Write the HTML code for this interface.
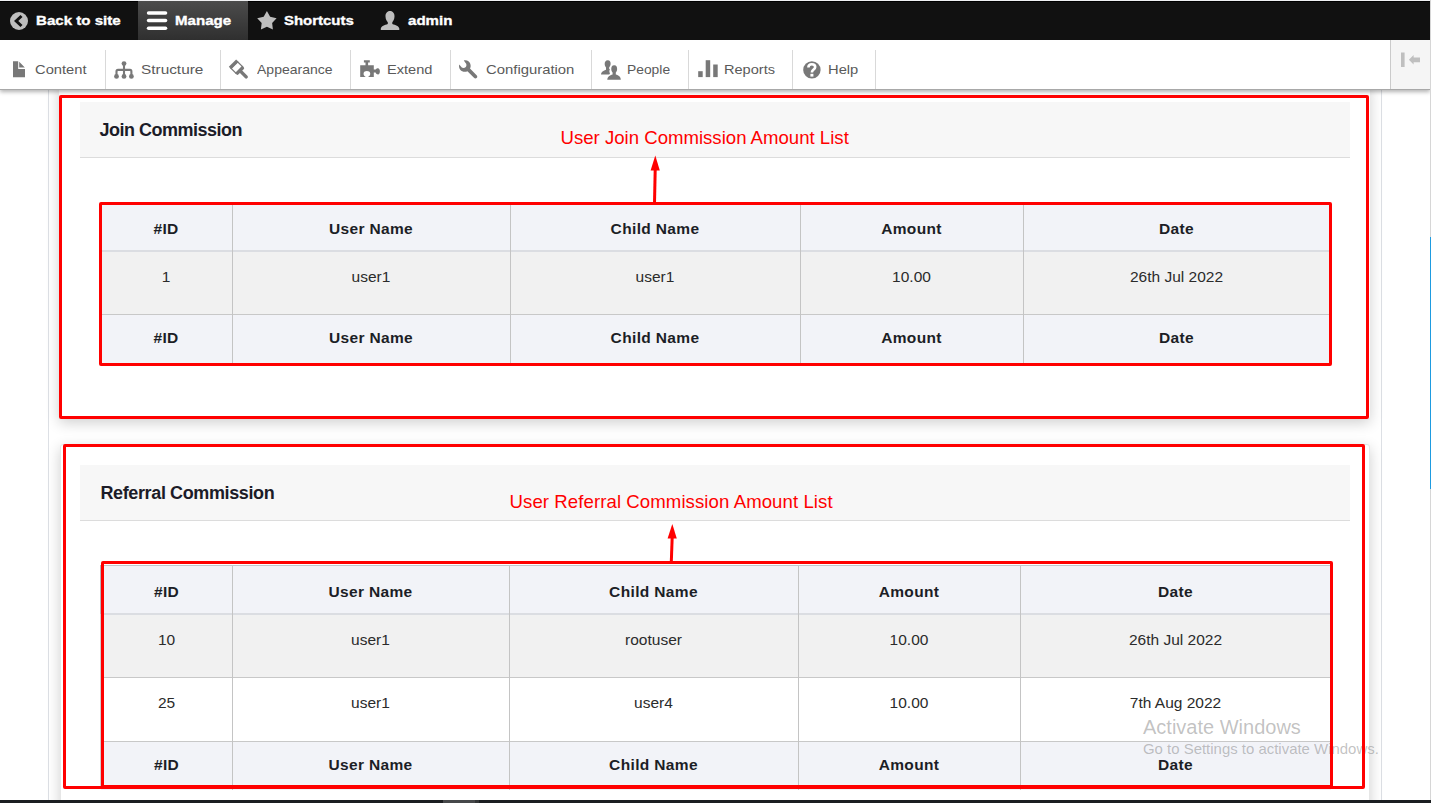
<!DOCTYPE html>
<html><head><meta charset="utf-8"><title>Commission</title>
<style>
html,body{margin:0;padding:0}
body{width:1431px;height:803px;overflow:hidden;position:relative;background:#fff;font-family:"Liberation Sans", sans-serif}
</style></head><body>
<div style="position:absolute;left:48px;top:89px;width:1px;height:711px;background:#dde0e5"></div>
<div style="position:absolute;left:1381px;top:89px;width:1px;height:711px;background:#dde0e5"></div>
<div style="position:absolute;left:59px;top:82px;width:1311px;height:337px;box-shadow:0 4px 14px rgba(0,0,0,0.19);border-radius:3px;background:#fff"></div>
<div style="position:absolute;left:60px;top:444px;width:1310px;height:380px;box-shadow:0 4px 14px rgba(0,0,0,0.19);border-radius:3px;background:#fff;border:1px solid #e6e6e6;box-sizing:border-box"></div>
<div style="position:absolute;left:80px;top:102px;width:1270px;height:55px;background:#f7f7f7;border-bottom:1px solid #dcdcdc"></div>
<div style="position:absolute;left:80px;top:465px;width:1270px;height:55px;background:#f7f7f7;border-bottom:1px solid #dcdcdc"></div>
<div style="position:absolute;left:99.5px;top:120.76px;font-size:18px;line-height:1;font-weight:bold;color:#1c1c28;letter-spacing:-0.5px;white-space:nowrap;">Join Commission</div>
<div style="position:absolute;left:100.5px;top:483.76px;font-size:18px;line-height:1;font-weight:bold;color:#1c1c28;letter-spacing:-0.38px;white-space:nowrap;">Referral Commission</div>
<div style="position:absolute;left:100px;top:204px;width:1230px;height:46px;background:#f2f3f8"></div>
<div style="position:absolute;left:100px;top:250px;width:1230px;height:2px;background:#dbdde2"></div>
<div style="position:absolute;left:100px;top:252px;width:1230px;height:62px;background:#f1f1f1"></div>
<div style="position:absolute;left:100px;top:314px;width:1230px;height:1px;background:#c8c8c8"></div>
<div style="position:absolute;left:100px;top:315px;width:1230px;height:49px;background:#f2f3f8"></div>
<div style="position:absolute;left:232px;top:204px;width:1px;height:160px;background:#c4c4c4"></div>
<div style="position:absolute;left:510px;top:204px;width:1px;height:160px;background:#c4c4c4"></div>
<div style="position:absolute;left:800px;top:204px;width:1px;height:160px;background:#c4c4c4"></div>
<div style="position:absolute;left:1023px;top:204px;width:1px;height:160px;background:#c4c4c4"></div>
<div style="position:absolute;left:100px;top:220.88px;width:132px;text-align:center;font-size:15.5px;line-height:1;font-weight:bold;color:#1c1e26;letter-spacing:0.35px;white-space:nowrap;">#ID</div>
<div style="position:absolute;left:232px;top:220.88px;width:278px;text-align:center;font-size:15.5px;line-height:1;font-weight:bold;color:#1c1e26;letter-spacing:0.35px;white-space:nowrap;">User Name</div>
<div style="position:absolute;left:510px;top:220.88px;width:290px;text-align:center;font-size:15.5px;line-height:1;font-weight:bold;color:#1c1e26;letter-spacing:0.35px;white-space:nowrap;">Child Name</div>
<div style="position:absolute;left:800px;top:220.88px;width:223px;text-align:center;font-size:15.5px;line-height:1;font-weight:bold;color:#1c1e26;letter-spacing:0.35px;white-space:nowrap;">Amount</div>
<div style="position:absolute;left:1023px;top:220.88px;width:307px;text-align:center;font-size:15.5px;line-height:1;font-weight:bold;color:#1c1e26;letter-spacing:0.35px;white-space:nowrap;">Date</div>
<div style="position:absolute;left:100px;top:268.88px;width:132px;text-align:center;font-size:15.5px;line-height:1;font-weight:normal;color:#2b2b2b;letter-spacing:0px;white-space:nowrap;">1</div>
<div style="position:absolute;left:232px;top:268.88px;width:278px;text-align:center;font-size:15.5px;line-height:1;font-weight:normal;color:#2b2b2b;letter-spacing:0px;white-space:nowrap;">user1</div>
<div style="position:absolute;left:510px;top:268.88px;width:290px;text-align:center;font-size:15.5px;line-height:1;font-weight:normal;color:#2b2b2b;letter-spacing:0px;white-space:nowrap;">user1</div>
<div style="position:absolute;left:800px;top:268.88px;width:223px;text-align:center;font-size:15.5px;line-height:1;font-weight:normal;color:#2b2b2b;letter-spacing:0px;white-space:nowrap;">10.00</div>
<div style="position:absolute;left:1023px;top:268.88px;width:307px;text-align:center;font-size:15.5px;line-height:1;font-weight:normal;color:#2b2b2b;letter-spacing:0px;white-space:nowrap;">26th Jul 2022</div>
<div style="position:absolute;left:100px;top:329.88px;width:132px;text-align:center;font-size:15.5px;line-height:1;font-weight:bold;color:#1c1e26;letter-spacing:0.35px;white-space:nowrap;">#ID</div>
<div style="position:absolute;left:232px;top:329.88px;width:278px;text-align:center;font-size:15.5px;line-height:1;font-weight:bold;color:#1c1e26;letter-spacing:0.35px;white-space:nowrap;">User Name</div>
<div style="position:absolute;left:510px;top:329.88px;width:290px;text-align:center;font-size:15.5px;line-height:1;font-weight:bold;color:#1c1e26;letter-spacing:0.35px;white-space:nowrap;">Child Name</div>
<div style="position:absolute;left:800px;top:329.88px;width:223px;text-align:center;font-size:15.5px;line-height:1;font-weight:bold;color:#1c1e26;letter-spacing:0.35px;white-space:nowrap;">Amount</div>
<div style="position:absolute;left:1023px;top:329.88px;width:307px;text-align:center;font-size:15.5px;line-height:1;font-weight:bold;color:#1c1e26;letter-spacing:0.35px;white-space:nowrap;">Date</div>
<div style="position:absolute;left:101px;top:566px;width:1230px;height:47px;background:#f2f3f8"></div>
<div style="position:absolute;left:101px;top:613px;width:1230px;height:2px;background:#dbdde2"></div>
<div style="position:absolute;left:101px;top:615px;width:1230px;height:62px;background:#f1f1f1"></div>
<div style="position:absolute;left:101px;top:677px;width:1230px;height:1px;background:#c8c8c8"></div>
<div style="position:absolute;left:101px;top:678px;width:1230px;height:63px;background:#ffffff"></div>
<div style="position:absolute;left:101px;top:741px;width:1230px;height:1px;background:#c8c8c8"></div>
<div style="position:absolute;left:101px;top:742px;width:1230px;height:48px;background:#f2f3f8"></div>
<div style="position:absolute;left:232px;top:566px;width:1px;height:224px;background:#c4c4c4"></div>
<div style="position:absolute;left:509px;top:566px;width:1px;height:224px;background:#c4c4c4"></div>
<div style="position:absolute;left:798px;top:566px;width:1px;height:224px;background:#c4c4c4"></div>
<div style="position:absolute;left:1020px;top:566px;width:1px;height:224px;background:#c4c4c4"></div>
<div style="position:absolute;left:101px;top:583.88px;width:131px;text-align:center;font-size:15.5px;line-height:1;font-weight:bold;color:#1c1e26;letter-spacing:0.35px;white-space:nowrap;">#ID</div>
<div style="position:absolute;left:232px;top:583.88px;width:277px;text-align:center;font-size:15.5px;line-height:1;font-weight:bold;color:#1c1e26;letter-spacing:0.35px;white-space:nowrap;">User Name</div>
<div style="position:absolute;left:509px;top:583.88px;width:289px;text-align:center;font-size:15.5px;line-height:1;font-weight:bold;color:#1c1e26;letter-spacing:0.35px;white-space:nowrap;">Child Name</div>
<div style="position:absolute;left:798px;top:583.88px;width:222px;text-align:center;font-size:15.5px;line-height:1;font-weight:bold;color:#1c1e26;letter-spacing:0.35px;white-space:nowrap;">Amount</div>
<div style="position:absolute;left:1020px;top:583.88px;width:311px;text-align:center;font-size:15.5px;line-height:1;font-weight:bold;color:#1c1e26;letter-spacing:0.35px;white-space:nowrap;">Date</div>
<div style="position:absolute;left:101px;top:631.88px;width:131px;text-align:center;font-size:15.5px;line-height:1;font-weight:normal;color:#2b2b2b;letter-spacing:0px;white-space:nowrap;">10</div>
<div style="position:absolute;left:232px;top:631.88px;width:277px;text-align:center;font-size:15.5px;line-height:1;font-weight:normal;color:#2b2b2b;letter-spacing:0px;white-space:nowrap;">user1</div>
<div style="position:absolute;left:509px;top:631.88px;width:289px;text-align:center;font-size:15.5px;line-height:1;font-weight:normal;color:#2b2b2b;letter-spacing:0px;white-space:nowrap;">rootuser</div>
<div style="position:absolute;left:798px;top:631.88px;width:222px;text-align:center;font-size:15.5px;line-height:1;font-weight:normal;color:#2b2b2b;letter-spacing:0px;white-space:nowrap;">10.00</div>
<div style="position:absolute;left:1020px;top:631.88px;width:311px;text-align:center;font-size:15.5px;line-height:1;font-weight:normal;color:#2b2b2b;letter-spacing:0px;white-space:nowrap;">26th Jul 2022</div>
<div style="position:absolute;left:101px;top:694.88px;width:131px;text-align:center;font-size:15.5px;line-height:1;font-weight:normal;color:#2b2b2b;letter-spacing:0px;white-space:nowrap;">25</div>
<div style="position:absolute;left:232px;top:694.88px;width:277px;text-align:center;font-size:15.5px;line-height:1;font-weight:normal;color:#2b2b2b;letter-spacing:0px;white-space:nowrap;">user1</div>
<div style="position:absolute;left:509px;top:694.88px;width:289px;text-align:center;font-size:15.5px;line-height:1;font-weight:normal;color:#2b2b2b;letter-spacing:0px;white-space:nowrap;">user4</div>
<div style="position:absolute;left:798px;top:694.88px;width:222px;text-align:center;font-size:15.5px;line-height:1;font-weight:normal;color:#2b2b2b;letter-spacing:0px;white-space:nowrap;">10.00</div>
<div style="position:absolute;left:1020px;top:694.88px;width:311px;text-align:center;font-size:15.5px;line-height:1;font-weight:normal;color:#2b2b2b;letter-spacing:0px;white-space:nowrap;">7th Aug 2022</div>
<div style="position:absolute;left:101px;top:756.88px;width:131px;text-align:center;font-size:15.5px;line-height:1;font-weight:bold;color:#1c1e26;letter-spacing:0.35px;white-space:nowrap;">#ID</div>
<div style="position:absolute;left:232px;top:756.88px;width:277px;text-align:center;font-size:15.5px;line-height:1;font-weight:bold;color:#1c1e26;letter-spacing:0.35px;white-space:nowrap;">User Name</div>
<div style="position:absolute;left:509px;top:756.88px;width:289px;text-align:center;font-size:15.5px;line-height:1;font-weight:bold;color:#1c1e26;letter-spacing:0.35px;white-space:nowrap;">Child Name</div>
<div style="position:absolute;left:798px;top:756.88px;width:222px;text-align:center;font-size:15.5px;line-height:1;font-weight:bold;color:#1c1e26;letter-spacing:0.35px;white-space:nowrap;">Amount</div>
<div style="position:absolute;left:1020px;top:756.88px;width:311px;text-align:center;font-size:15.5px;line-height:1;font-weight:bold;color:#1c1e26;letter-spacing:0.35px;white-space:nowrap;">Date</div>
<div style="position:absolute;left:101px;top:565px;width:1230px;height:1px;background:#c2c6ca"></div>
<div style="position:absolute;left:100px;top:565px;width:1px;height:49px;background:#b4b8bc"></div>
<div style="position:absolute;left:100px;top:614px;width:1px;height:175px;background:#d0d0d0"></div>
<div style="position:absolute;left:1143px;top:716.67px;font-size:20px;line-height:1;font-weight:normal;color:rgba(120,120,120,0.45);letter-spacing:0px;white-space:nowrap;">Activate Windows</div>
<div style="position:absolute;left:1143px;top:741.54px;font-size:14.95px;line-height:1;font-weight:normal;color:rgba(120,120,120,0.45);letter-spacing:0px;white-space:nowrap;">Go to Settings to activate Windows.</div>
<div style="position:absolute;left:560.5px;top:129.25px;font-size:18.6px;line-height:1;font-weight:normal;color:#ff0000;letter-spacing:0px;white-space:nowrap;">User Join Commission Amount List</div>
<div style="position:absolute;left:509.5px;top:493.25px;font-size:18.6px;line-height:1;font-weight:normal;color:#ff0000;letter-spacing:0.08px;white-space:nowrap;">User Referral Commission Amount List</div>
<div style="position:absolute;left:59px;top:95px;width:1304px;height:318px;border:3px solid #ff0000;border-radius:2px"></div>
<div style="position:absolute;left:99px;top:202px;width:1227px;height:158px;border:3px solid #ff0000;border-radius:2px"></div>
<div style="position:absolute;left:63px;top:444px;width:1296px;height:339px;border:3px solid #ff0000;border-radius:2px"></div>
<div style="position:absolute;left:101px;top:561px;width:1226px;height:221px;border:3px solid #f00;border-bottom-width:4px;border-radius:2px"></div>
<svg style="position:absolute;left:0;top:0" width="1431" height="803"><polygon points="655.3,155.5 650.6,170.5 659.8,170.5" fill="#f00"/><line x1="655.2" y1="169" x2="654.5" y2="203" stroke="#f00" stroke-width="3"/><polygon points="672.3,524 667.6,538.5 676.8,538.5" fill="#f00"/><line x1="672.2" y1="537" x2="671.3" y2="562" stroke="#f00" stroke-width="3"/></svg>
<div style="position:absolute;left:0px;top:800px;width:1431px;height:3px;background:#1b1e21"></div>
<div style="position:absolute;left:443px;top:800px;width:32px;height:3px;background:#46484a"></div>
<div style="position:absolute;left:475px;top:800px;width:4px;height:3px;background:#333537"></div>
<div style="position:absolute;left:0px;top:40px;width:1430px;height:49px;background:#fff;border-bottom:1px solid #a8a8a8;box-shadow:0 2px 4px rgba(0,0,0,0.3);box-sizing:border-box;height:50px"></div>
<div style="position:absolute;left:0px;top:0px;width:1430px;height:40px;background:#111"></div>
<div style="position:absolute;left:0px;top:0px;width:1431px;height:1px;background:#eff0f2"></div>
<div style="position:absolute;left:0px;top:1px;width:1431px;height:1px;background:#000"></div>
<div style="position:absolute;left:138px;top:1px;width:110px;height:39px;background:linear-gradient(#4c4c4c,#2f2f2f)"></div>
<div style="position:absolute;left:36px;top:13.99px;font-size:13px;line-height:1;font-weight:bold;color:#ffffff;letter-spacing:0px;white-space:nowrap;-webkit-text-stroke:0.35px #fff;transform-origin:0 0;transform:scaleX(1.16)">Back to site</div>
<div style="position:absolute;left:174.5px;top:13.99px;font-size:13px;line-height:1;font-weight:bold;color:#ffffff;letter-spacing:0px;white-space:nowrap;-webkit-text-stroke:0.35px #fff;transform-origin:0 0;transform:scaleX(1.16)">Manage</div>
<div style="position:absolute;left:284px;top:13.99px;font-size:13px;line-height:1;font-weight:bold;color:#ffffff;letter-spacing:0px;white-space:nowrap;-webkit-text-stroke:0.35px #fff;transform-origin:0 0;transform:scaleX(1.15)">Shortcuts</div>
<div style="position:absolute;left:408px;top:13.99px;font-size:13px;line-height:1;font-weight:bold;color:#ffffff;letter-spacing:0px;white-space:nowrap;-webkit-text-stroke:0.35px #fff;transform-origin:0 0;transform:scaleX(1.16)">admin</div>
<div style="position:absolute;left:35px;top:62.99px;font-size:13px;line-height:1;font-weight:normal;color:#5a5a5a;letter-spacing:0px;white-space:nowrap;transform-origin:0 0;transform:scaleX(1.133)">Content</div>
<div style="position:absolute;left:140.7px;top:62.99px;font-size:13px;line-height:1;font-weight:normal;color:#5a5a5a;letter-spacing:0px;white-space:nowrap;transform-origin:0 0;transform:scaleX(1.182)">Structure</div>
<div style="position:absolute;left:257.2px;top:62.99px;font-size:13px;line-height:1;font-weight:normal;color:#5a5a5a;letter-spacing:0px;white-space:nowrap;transform-origin:0 0;transform:scaleX(1.077)">Appearance</div>
<div style="position:absolute;left:387px;top:62.99px;font-size:13px;line-height:1;font-weight:normal;color:#5a5a5a;letter-spacing:0px;white-space:nowrap;transform-origin:0 0;transform:scaleX(1.123)">Extend</div>
<div style="position:absolute;left:485.6px;top:62.99px;font-size:13px;line-height:1;font-weight:normal;color:#5a5a5a;letter-spacing:0px;white-space:nowrap;transform-origin:0 0;transform:scaleX(1.143)">Configuration</div>
<div style="position:absolute;left:627.3px;top:62.99px;font-size:13px;line-height:1;font-weight:normal;color:#5a5a5a;letter-spacing:0px;white-space:nowrap;transform-origin:0 0;transform:scaleX(1.064)">People</div>
<div style="position:absolute;left:723.9px;top:62.99px;font-size:13px;line-height:1;font-weight:normal;color:#5a5a5a;letter-spacing:0px;white-space:nowrap;transform-origin:0 0;transform:scaleX(1.12)">Reports</div>
<div style="position:absolute;left:828.1px;top:62.99px;font-size:13px;line-height:1;font-weight:normal;color:#5a5a5a;letter-spacing:0px;white-space:nowrap;transform-origin:0 0;transform:scaleX(1.132)">Help</div>
<div style="position:absolute;left:105px;top:50px;width:1px;height:39px;background:#d9d9d9"></div>
<div style="position:absolute;left:220px;top:50px;width:1px;height:39px;background:#d9d9d9"></div>
<div style="position:absolute;left:350px;top:50px;width:1px;height:39px;background:#d9d9d9"></div>
<div style="position:absolute;left:450px;top:50px;width:1px;height:39px;background:#d9d9d9"></div>
<div style="position:absolute;left:591px;top:50px;width:1px;height:39px;background:#d9d9d9"></div>
<div style="position:absolute;left:688px;top:50px;width:1px;height:39px;background:#d9d9d9"></div>
<div style="position:absolute;left:792px;top:50px;width:1px;height:39px;background:#d9d9d9"></div>
<div style="position:absolute;left:875px;top:50px;width:1px;height:39px;background:#d9d9d9"></div>
<div style="position:absolute;left:1390px;top:40px;width:40px;height:49px;background:#f5f5f5;border-left:1px solid #cbcbcb;box-sizing:border-box"></div>
<svg style="position:absolute;left:0;top:0" width="1431" height="90">
<!-- back to site -->
<circle cx="19" cy="21" r="9" fill="#bebebe"/>
<polyline points="21.5,16 16.2,21 21.5,26" fill="none" stroke="#111" stroke-width="3"/>
<!-- hamburger -->
<g stroke="#fff" stroke-width="3.6" stroke-linecap="round">
<line x1="148.6" y1="13" x2="165.5" y2="13"/><line x1="148.6" y1="20.5" x2="165.5" y2="20.5"/><line x1="148.6" y1="28.2" x2="165.5" y2="28.2"/>
</g>
<!-- star -->
<polygon fill="#bebebe" points="266.90,11.09 270.13,16.84 276.60,18.14 272.13,22.99 272.90,29.54 266.90,26.79 260.90,29.54 261.67,22.99 257.20,18.14 263.67,16.84"/>
<!-- person -->
<path fill="#bebebe" d="M390 11 C393 11 394.6 13.6 394.5 16.4 C394.4 19.2 393.2 21.2 392.3 22.2 L392.3 24 C395.5 25 399 26.3 399.3 28.5 L399.3 30 L380.8 30 L380.8 28.5 C381.2 26.3 384.6 25 387.8 24 L387.8 22.2 C386.8 21.2 385.6 19.2 385.5 16.4 C385.4 13.6 387 11 390 11 Z"/>
<!-- content -->
<path fill="#787878" d="M13 61.3 H18.2 V69 H25 V77.2 H13 Z M19.2 61.8 L24.8 67.4 H19.2 Z"/>
<!-- structure -->
<g fill="#787878"><circle cx="124" cy="63.6" r="2.4"/><circle cx="116.5" cy="76.4" r="2.4"/><circle cx="124" cy="76.4" r="2.4"/><circle cx="131.4" cy="76.4" r="2.4"/></g>
<g fill="none" stroke="#787878" stroke-width="2.1"><line x1="124" y1="63.6" x2="124" y2="76.4"/><path d="M116.5 76.4 V71.5 Q116.5 69.9 118 69.9 H130 Q131.4 69.9 131.4 71.5 V76.4"/></g>
<!-- appearance brush -->
<g transform="translate(236.3,67) rotate(-45)">
<rect x="-5.2" y="-5.4" width="10.4" height="3.4" fill="#787878"/>
<rect x="-4.6" y="-3" width="9.2" height="7" fill="none" stroke="#787878" stroke-width="1.2"/>
<path d="M-5.2 3.6 H5.2 V5.2 Q5.2 6.8 3.6 6.8 H-3.6 Q-5.2 6.8 -5.2 5.2 Z" fill="#787878"/>
<rect x="-1.75" y="5.5" width="3.5" height="10.2" rx="1.75" fill="#787878"/>
</g>
<!-- extend puzzle -->
<path fill="#787878" d="M360.2 65.2 H365.5 V62.6 H363.9 V60.2 H369.8 V62.6 H368.1 V65.2 H373.8 V69.6 H375.6 C376.2 68.4 377.2 68.2 378.2 68.2 C379.4 68.4 379.9 70 379.9 71.3 C379.9 72.8 379.3 74.5 378 74.5 C377 74.5 376.2 74 375.6 72.6 H373.8 V77.1 H368 C369.6 76 370.4 74.8 370.2 73.2 C370 71.8 368.6 71 366.9 71 C365.2 71 363.8 71.8 363.6 73.2 C363.4 74.8 364.2 76 365.8 77.1 H360.2 Z"/>
<!-- wrench -->
<path fill="#787878" d="M463.8 60.5 C467 59.8 470.2 61.6 470.6 65 C470.8 66.3 470.6 67.6 470 68.6 L476.6 75.2 C477.6 76.2 477.4 77.4 476.6 78 C475.8 78.7 474.7 78.6 474 77.8 L467.4 71.2 C466.2 71.8 464.8 72 463.4 71.7 C460.2 71 458.4 67.8 459.2 64.6 L461.8 67.6 C462.8 68.4 464.8 68.2 465.8 67 C466.8 65.8 466.6 63.9 465.6 63 Z"/>
<!-- people -->
<path fill="#787878" d="M607.8 60.2 C610 60.2 610.9 62.2 610.6 64.2 C610.4 65.6 609.8 66.6 609.2 67.3 L609.2 69 C609.8 69.2 610 69.3 610 69.3 C609.4 70.3 609.2 71.4 609.6 72.6 L610 73.6 L609.2 74.6 H601 C601 72.4 602.6 71 606 69.8 L606 67.4 C605.3 66.6 604.8 65.6 604.7 64.2 C604.5 62.2 605.6 60.2 607.8 60.2 Z"/>
<path fill="#787878" d="M614.2 65.2 C616.6 65.2 617.3 67.3 617.1 69.4 C617 70.8 616.4 71.8 615.8 72.6 L615.8 74.4 C618.6 75.3 620.8 76.6 620.8 79.7 H607.3 C607.4 76.6 609.8 75.3 612.6 74.4 L612.6 72.6 C612 71.8 611.4 70.8 611.3 69.4 C611.1 67.3 611.8 65.2 614.2 65.2 Z"/>
<!-- reports -->
<g fill="#787878"><rect x="698.2" y="71.2" width="4.5" height="5.9"/><rect x="705.7" y="60.2" width="4.5" height="16.9"/><rect x="713.2" y="64.5" width="4.5" height="12.6"/></g>
<!-- help -->
<circle cx="811.9" cy="69.9" r="8.7" fill="#787878"/>
<path fill="none" stroke="#fff" stroke-width="2.6" d="M808.4 67.4 C808.4 65.2 810 64.2 811.8 64.2 C813.8 64.2 815.2 65.4 815.2 67 C815.2 68.6 813.8 69.4 812.9 70.2 C812.1 70.9 811.9 71.4 811.9 72.6"/>
<rect x="810.4" y="73.8" width="3" height="2.8" fill="#fff"/>
<!-- toggle -->
<rect x="1401" y="52.5" width="3.6" height="14.5" fill="#bfbfbf"/>
<path fill="#bfbfbf" d="M1408.9 59.8 L1413.6 55 V57.6 H1420 V62.2 H1413.6 V64.6 Z"/>
</svg>
<div style="position:absolute;left:1430px;top:0px;width:1px;height:800px;background:#d6d6d6"></div>
<div style="position:absolute;left:1430px;top:237px;width:1px;height:252px;background:#1e9be0"></div>
</body></html>
